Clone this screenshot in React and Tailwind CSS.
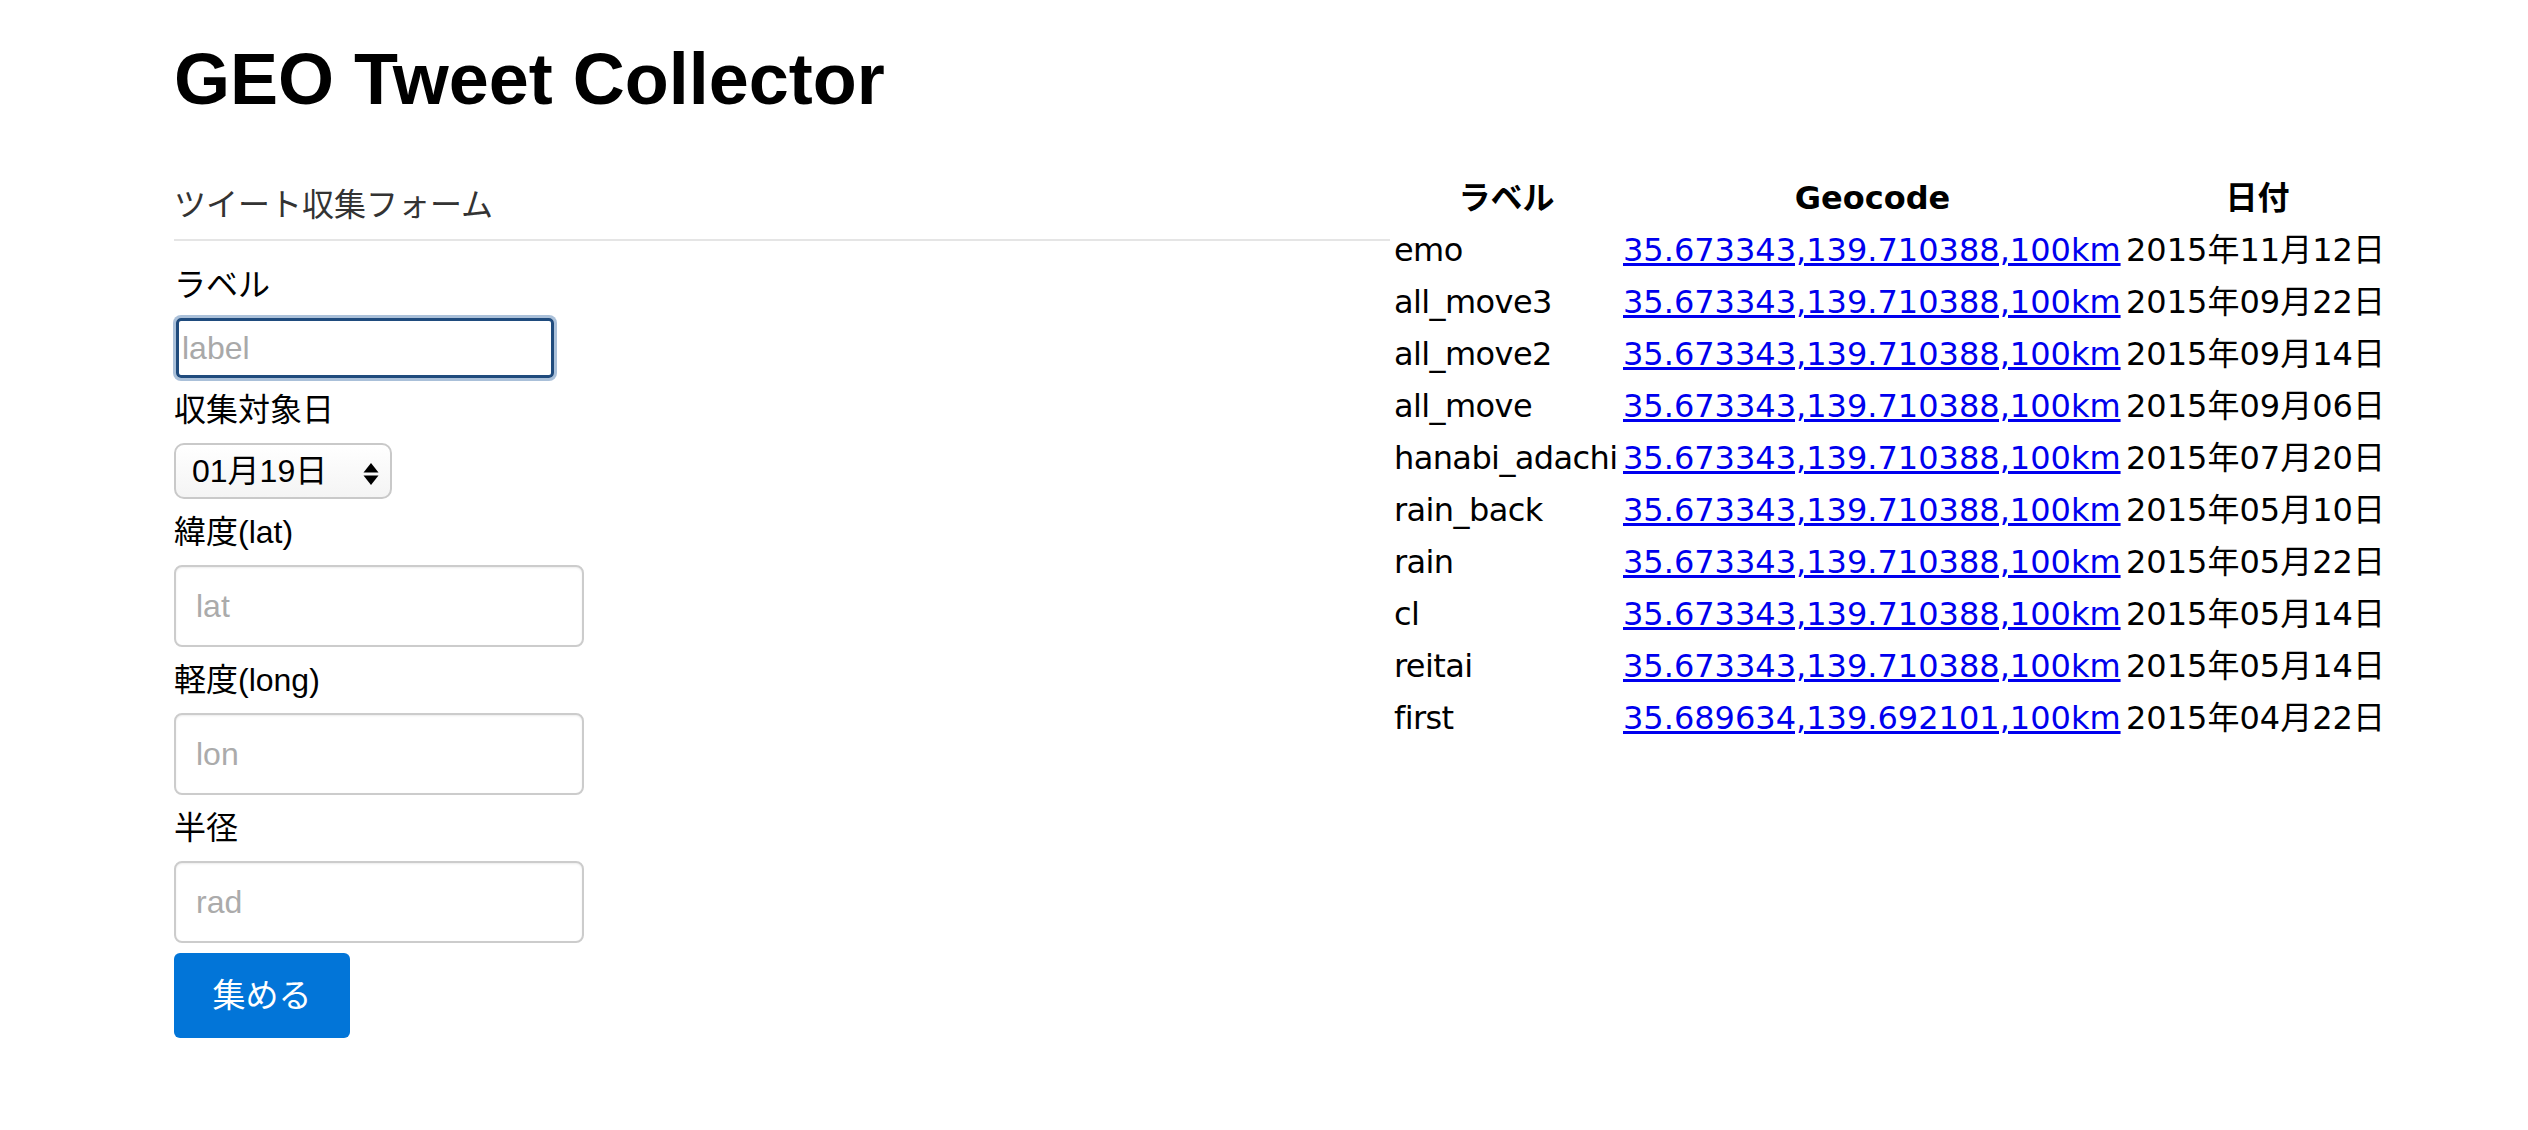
import React from "react";

const rows = [
  ["emo", "35.673343,139.710388,100km", "2015年11月12日"],
  ["all_move3", "35.673343,139.710388,100km", "2015年09月22日"],
  ["all_move2", "35.673343,139.710388,100km", "2015年09月14日"],
  ["all_move", "35.673343,139.710388,100km", "2015年09月06日"],
  ["hanabi_adachi", "35.673343,139.710388,100km", "2015年07月20日"],
  ["rain_back", "35.673343,139.710388,100km", "2015年05月10日"],
  ["rain", "35.673343,139.710388,100km", "2015年05月22日"],
  ["cl", "35.673343,139.710388,100km", "2015年05月14日"],
  ["reitai", "35.673343,139.710388,100km", "2015年05月14日"],
  ["first", "35.689634,139.692101,100km", "2015年04月22日"],
];

export default function App() {
  return (
    <div className="min-h-screen bg-white text-black font-['Liberation_Sans','Noto_Sans_CJK_JP',sans-serif]">
      <div className="pl-[174px]">
        <h1 className="pt-[40px] text-[72px] leading-[79px] font-bold m-0">GEO Tweet Collector</h1>
        <div className="mt-[53px] flex items-start">
          <div className="w-[1216px] pt-[9px] shrink-0">
            <div className="text-[32px] leading-[48px] text-[#333] pb-[10px] border-b-2 border-[#e5e5e5]">
              ツイート収集フォーム
            </div>
            <div className="flex flex-col items-start">
              <label className="mt-[20px] text-[32px] leading-[48px]">ラベル</label>
              <input
                className="mt-[9px] ml-[2px] w-[378px] h-[60px] border-[3px] border-[#1f4b7d] rounded-[5px] shadow-[0_0_0_3px_#aac0d9] px-[3px] text-[32px] outline-none placeholder:text-[#a9a9a9]"
                placeholder="label"
              />
              <label className="mt-[8px] text-[32px] leading-[48px]">収集対象日</label>
              <div className="relative mt-[9px] w-[218px] h-[56px]">
                <select className="appearance-none w-full h-full border-2 border-[#c9c9c9] rounded-[10px] bg-gradient-to-b from-white to-[#f4f4f4] pl-[16px] text-[32px] text-black outline-none">
                  <option>01月19日</option>
                </select>
                <svg className="absolute left-[189px] top-[19px] pointer-events-none" width="16" height="24" viewBox="0 0 16 24">
                  <path d="M8 1 L15.5 10.5 L0.5 10.5 Z" fill="#000" />
                  <path d="M0.5 13.5 L15.5 13.5 L8 23 Z" fill="#000" />
                </svg>
              </div>
              <label className="mt-[9px] text-[32px] leading-[48px]">緯度(lat)</label>
              <input
                className="mt-[9px] w-[410px] h-[82px] border-2 border-[#cccccc] rounded-[8px] shadow-[inset_0_1px_2px_rgba(0,0,0,0.08)] pl-[20px] text-[32px] outline-none placeholder:text-[#ababab]"
                placeholder="lat"
              />
              <label className="mt-[9px] text-[32px] leading-[48px]">軽度(long)</label>
              <input
                className="mt-[9px] w-[410px] h-[82px] border-2 border-[#cccccc] rounded-[8px] shadow-[inset_0_1px_2px_rgba(0,0,0,0.08)] pl-[20px] text-[32px] outline-none placeholder:text-[#ababab]"
                placeholder="lon"
              />
              <label className="mt-[9px] text-[32px] leading-[48px]">半径</label>
              <input
                className="mt-[9px] w-[410px] h-[82px] border-2 border-[#cccccc] rounded-[8px] shadow-[inset_0_1px_2px_rgba(0,0,0,0.08)] pl-[20px] text-[32px] outline-none placeholder:text-[#ababab]"
                placeholder="rad"
              />
              <button className="mt-[10px] w-[176px] h-[85px] bg-[#0275d8] text-white rounded-[6px] text-[33px] leading-[48px]">
                集める
              </button>
            </div>
          </div>
          <table className="ml-[2px] border-collapse table-fixed w-[999px] text-[32px] font-['DejaVu_Sans','Noto_Sans_CJK_JP',sans-serif]">
            <thead>
              <tr>
                <th className="w-[229px] p-[2px] leading-[48px] font-bold text-center">ラベル</th>
                <th className="w-[503px] p-[2px] leading-[48px] font-bold text-center">Geocode</th>
                <th className="w-[267px] p-[2px] leading-[48px] font-bold text-center">日付</th>
              </tr>
            </thead>
            <tbody>
              {rows.map((r, i) => (
                <tr key={i}>
                  <td className="p-[2px] leading-[48px] whitespace-nowrap tracking-[-0.6px]">{r[0]}</td>
                  <td className="p-[2px] leading-[48px] whitespace-nowrap">
                    <a href="#" className="text-[#0000ee] underline">{r[1]}</a>
                  </td>
                  <td className="p-[2px] leading-[48px] whitespace-nowrap">{r[2]}</td>
                </tr>
              ))}
            </tbody>
          </table>
        </div>
      </div>
    </div>
  );
}
